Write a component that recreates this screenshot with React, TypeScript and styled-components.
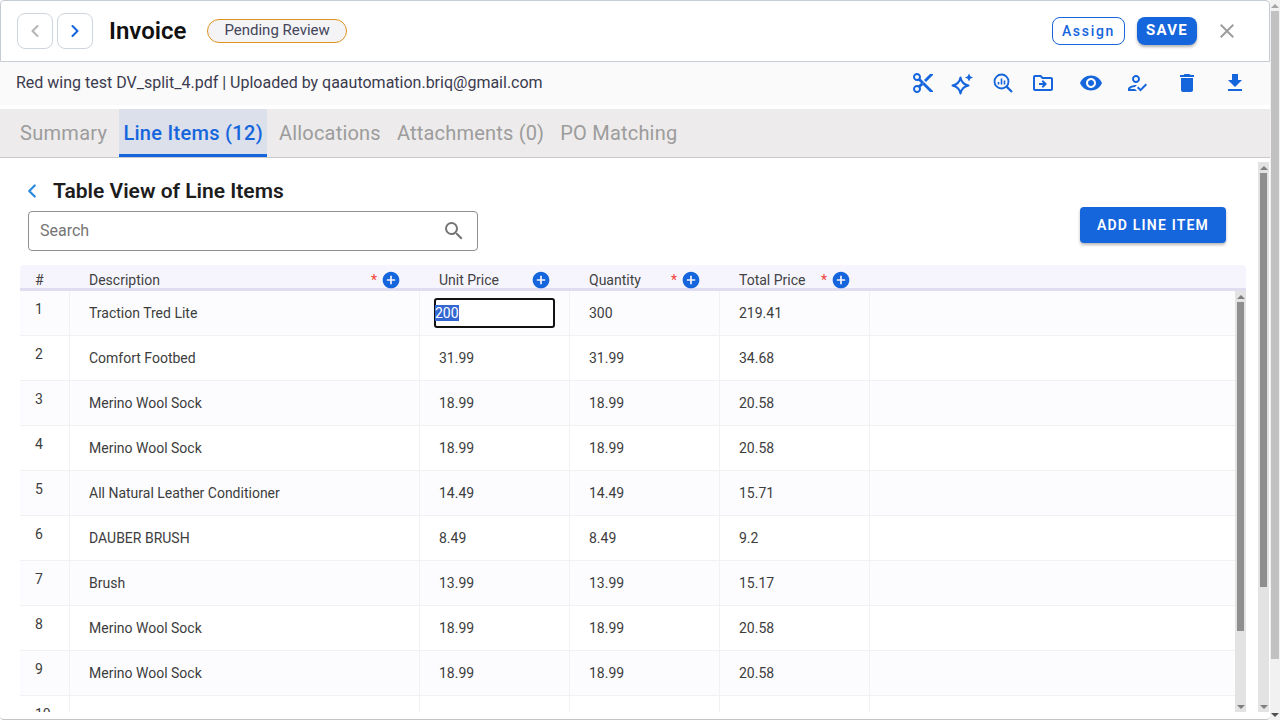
import styled, { createGlobalStyle } from 'styled-components';
import { ChevronLeft, ChevronRight } from 'lucide-react';
import {
  MdAddCircle,
  MdClose,
  MdContentCut,
  MdDelete,
  MdFileDownload,
  MdOutlineDriveFileMove,
  MdOutlineHowToReg,
  MdSearch,
  MdVisibility,
} from 'react-icons/md';

const BLUE = '#1565dc';

const GlobalStyle = createGlobalStyle`
  html, body {
    margin: 0;
    padding: 0;
    width: 1280px;
    height: 720px;
    overflow: hidden;
    background: #fff;
    font-family: Roboto, "Liberation Sans", sans-serif;
  }
  * { box-sizing: border-box; }
`;

const Page = styled.div`
  display: flex;
  width: 1280px;
  height: 720px;
`;

const Dialog = styled.div`
  display: flex;
  flex-direction: column;
  width: 1270px;
  height: 720px;
  border-bottom: 1px solid #c4c4c4;
  border-radius: 0 0 4px 4px;
  background: #fff;
  overflow: hidden;
`;

const Header = styled.header`
  display: flex;
  align-items: center;
  flex: none;
  height: 62px;
  padding: 0 30px 0 16px;
  border: 1px solid #c6ccd4;
  border-radius: 4px 4px 0 0;
`;

const NavButton = styled.button<{ $off?: boolean }>`
  display: flex;
  align-items: center;
  justify-content: center;
  width: 36px;
  height: 36px;
  margin-right: 4px;
  padding: 0;
  border: 1px solid #cfd5dc;
  border-radius: 8px;
  background: #fff;
  color: ${(p) => (p.$off ? '#b5b5b5' : BLUE)};
`;

const Title = styled.h1`
  margin: 0 21px 0 12px;
  font-size: 24px;
  font-weight: 600;
  color: #111;
`;

const Badge = styled.span`
  display: flex;
  align-items: center;
  height: 24px;
  padding: 0 16px 2px;
  border: 1px solid #e0921f;
  border-radius: 12px;
  background: #f4f4f6;
  font-size: 15px;
  color: #44445a;
`;

const Spacer = styled.div`
  flex: 1;
`;

const AssignButton = styled.button`
  width: 73px;
  height: 28px;
  margin-right: 12px;
  padding: 0;
  border: 1px solid ${BLUE};
  border-radius: 8px;
  background: #fff;
  color: ${BLUE};
  font: 500 14px Roboto, sans-serif;
  letter-spacing: 1.7px;
`;

const SaveButton = styled.button`
  width: 60px;
  height: 28px;
  margin-right: 18px;
  padding: 0 0 2px;
  border: 0;
  border-radius: 8px;
  background: ${BLUE};
  color: #fff;
  font: 700 15px Roboto, sans-serif;
  letter-spacing: 1.3px;
  box-shadow: 0 2px 3px rgba(0, 0, 0, 0.3);
`;

const CloseButton = styled.span`
  display: flex;
  color: #9e9e9e;
`;

const SubHeader = styled.div`
  display: flex;
  align-items: center;
  justify-content: space-between;
  flex: none;
  height: 43px;
  padding: 0 19px 0 16px;
  background: #fafafa;
  font-size: 16px;
  color: #3b3b4f;
`;

const FileLine = styled.span`
  margin-top: -2px;
`;

const IconRow = styled.div`
  display: flex;
  align-items: center;
  margin-top: -1px;
`;

const IconCell = styled.span<{ $w: number }>`
  display: flex;
  align-items: center;
  justify-content: center;
  width: ${(p) => p.$w}px;
  color: ${BLUE};
`;

const TabBar = styled.nav`
  display: flex;
  flex: none;
  gap: 8px;
  height: 49px;
  margin-top: 4px;
  padding-left: 16px;
  background: #edebeb;
  border-bottom: 1px solid #c9c9c9;
`;

const Tab = styled.div<{ $active?: boolean }>`
  display: flex;
  align-items: center;
  height: 48px;
  padding: 3px 4px 0;
  font-size: 20px;
  font-weight: ${(p) => (p.$active ? 500 : 400)};
  letter-spacing: ${(p) => (p.$active ? '0.3px' : '0.2px')};
  color: ${(p) => (p.$active ? BLUE : '#9c9c9c')};
  background: ${(p) => (p.$active ? '#dbe0ea' : 'transparent')};
  border-bottom: 3px solid ${(p) => (p.$active ? BLUE : 'transparent')};

  &:first-child {
    letter-spacing: 0.3px;
  }
`;

const Content = styled.div`
  display: flex;
  flex: 1;
  min-height: 0;
`;

const Main = styled.main`
  display: flex;
  flex-direction: column;
  flex: 1;
  min-width: 0;
  padding: 20px 12px 7px 20px;
`;

const SectionTitle = styled.div`
  display: flex;
  align-items: center;
  gap: 10px;
  height: 26px;
  margin-bottom: 7px;
  padding-left: 1px;
  color: #1d1d1d;
  font-size: 21px;
  font-weight: 600;

  svg {
    color: #2a8be0;
  }
`;

const Toolbar = styled.div`
  display: flex;
  align-items: flex-start;
  justify-content: space-between;
  margin-bottom: 14px;
  padding: 0 20px 0 8px;
`;

const SearchBox = styled.div`
  display: flex;
  align-items: center;
  justify-content: space-between;
  width: 450px;
  height: 40px;
  padding: 0 11px 0 11px;
  border: 1px solid #8f8f8f;
  border-radius: 4px;
  color: #757575;
  font-size: 16px;
`;

const SearchLabel = styled.span`
  margin-top: -2px;
`;

const AddButton = styled.button`
  width: 146px;
  height: 36px;
  margin-top: -4px;
  padding: 0;
  border: 0;
  border-radius: 4px;
  background: ${BLUE};
  color: #fff;
  font: 600 14px Roboto, sans-serif;
  letter-spacing: 1.2px;
  box-shadow: 0 2px 3px rgba(0, 0, 0, 0.28);
`;

const COLUMNS = '50px 350px 150px 150px 150px 1fr';

const HeadRow = styled.div`
  display: grid;
  grid-template-columns: ${COLUMNS};
  flex: none;
  height: 26px;
  border-bottom: 3px solid #e0ddf1;
  border-radius: 4px 4px 0 0;
  background: #f6f5fd;
  font-size: 14px;
  color: #424242;
`;

const HeadCell = styled.div`
  display: flex;
  align-items: center;
  padding: 5px 20px 0 19px;
`;

const IndexHead = styled(HeadCell)`
  padding-left: 15px;
`;

const HeadLabel = styled.span`
  flex: 1;
`;

const Star = styled.span`
  margin-right: 4px;
  color: #f44336;
  font-size: 14px;
`;

const AddColumn = styled.span`
  display: flex;
  width: 20px;
  margin-right: -1px;
  color: ${BLUE};
`;

const TableBody = styled.div`
  display: flex;
  flex: 1;
  min-height: 0;
`;

const Rows = styled.div`
  flex: 1;
  min-width: 0;
  overflow: hidden;
`;

const Row = styled.div<{ $odd: boolean }>`
  display: grid;
  grid-template-columns: ${COLUMNS};
  height: 45px;
  border-bottom: 1px solid #f1f1f3;
  background: ${(p) => (p.$odd ? '#fcfcff' : '#fff')};
  font-size: 14px;
  color: #3d3d3d;
`;

const Cell = styled.div`
  display: flex;
  align-items: center;
  padding: 0 19px;
  border-right: 1px solid #f1f1f3;
  white-space: nowrap;
`;

const IndexCell = styled(Cell)`
  padding: 0 0 8px 15px;
`;

const LastCell = styled.div``;

const EditCell = styled(Cell)`
  padding: 0 14px;
`;

const EditBox = styled.div`
  display: flex;
  align-items: center;
  width: 122px;
  height: 30px;
  margin-top: -1px;
  border: 2px solid #111;
  border-radius: 3px;
  background: #fff;
`;

const Selected = styled.span`
  margin-left: -1px;
  background: #3367d1;
  color: #fff;
`;

const Rail = styled.div<{ $track: string; $w: number }>`
  display: flex;
  flex-direction: column;
  align-items: center;
  flex: none;
  width: ${(p) => p.$w}px;
  background: ${(p) => p.$track};
`;

const Arrow = styled.span<{ $down?: boolean; $color: string }>`
  flex: none;
  width: 0;
  height: 0;
  margin: 4px 0 3px;
  border-left: 4px solid transparent;
  border-right: 4px solid transparent;
  ${(p) => (p.$down ? 'border-top' : 'border-bottom')}: 4px solid ${(p) => p.$color};
`;

const Thumb = styled.div<{ $h: number; $color: string; $w: number }>`
  flex: none;
  width: ${(p) => p.$w}px;
  height: ${(p) => p.$h}px;
  background: ${(p) => p.$color};
`;

const RailGap = styled.div`
  flex: 1;
`;

const OuterRail = styled(Rail)`
  margin: 4px 1px 7px 0;
`;

const PAGE_ICON = 24;

function SparkleIcon() {
  return (
    <svg width={PAGE_ICON} height={PAGE_ICON} viewBox="0 0 24 24" fill="none" stroke="currentColor" strokeWidth="2">
      <path d="M9.5 6.5 C10.3 11 12.5 13.5 17.5 14.5 C12.5 15.5 10.3 18 9.5 22.5 C8.7 18 6.5 15.5 1.5 14.5 C6.5 13.5 8.7 11 9.5 6.5 Z" strokeLinejoin="round" />
      <path d="M18 2.5 L19.3 5.2 L22 6.5 L19.3 7.8 L18 10.5 L16.7 7.8 L14 6.5 L16.7 5.2 Z" fill="currentColor" stroke="none" />
    </svg>
  );
}

function InsightIcon() {
  return (
    <svg width={PAGE_ICON} height={PAGE_ICON} viewBox="0 0 24 24" fill="none" stroke="currentColor">
      <circle cx="10.5" cy="10.5" r="7" strokeWidth="1.8" />
      <path d="M15.6 15.6 L21 21" strokeWidth="2.2" />
      <path d="M7.5 13.5 V11 M10.5 13.5 V7.5 M13.5 13.5 V9.5" strokeWidth="1.6" />
    </svg>
  );
}

const toolbarIcons = [
  { w: 40, node: <MdContentCut size={PAGE_ICON} /> },
  { w: 40, node: <SparkleIcon /> },
  { w: 40, node: <InsightIcon /> },
  { w: 40, node: <MdOutlineDriveFileMove size={PAGE_ICON} /> },
  { w: 56, node: <MdVisibility size={PAGE_ICON} /> },
  { w: 36, node: <MdOutlineHowToReg size={PAGE_ICON} /> },
  { w: 64, node: <MdDelete size={PAGE_ICON} /> },
  { w: 32, node: <MdFileDownload size={PAGE_ICON} /> },
];

const tabs = ['Summary', 'Line Items (12)', 'Allocations', 'Attachments (0)', 'PO Matching'];

const columns = [
  { label: 'Description', required: true },
  { label: 'Unit Price', required: false },
  { label: 'Quantity', required: true },
  { label: 'Total Price', required: true },
];

const lines = [
  ['Traction Tred Lite', '200', '300', '219.41'],
  ['Comfort Footbed', '31.99', '31.99', '34.68'],
  ['Merino Wool Sock', '18.99', '18.99', '20.58'],
  ['Merino Wool Sock', '18.99', '18.99', '20.58'],
  ['All Natural Leather Conditioner', '14.49', '14.49', '15.71'],
  ['DAUBER BRUSH', '8.49', '8.49', '9.2'],
  ['Brush', '13.99', '13.99', '15.17'],
  ['Merino Wool Sock', '18.99', '18.99', '20.58'],
  ['Merino Wool Sock', '18.99', '18.99', '20.58'],
  ['Merino Wool Sock', '18.99', '18.99', '20.58'],
];

export default function App() {
  return (
    <>
      <GlobalStyle />
      <Page>
        <Dialog>
          <Header>
            <NavButton $off>
              <ChevronLeft size={20} strokeWidth={2.5} />
            </NavButton>
            <NavButton>
              <ChevronRight size={20} strokeWidth={2.5} />
            </NavButton>
            <Title>Invoice</Title>
            <Badge>Pending Review</Badge>
            <Spacer />
            <AssignButton>Assign</AssignButton>
            <SaveButton>SAVE</SaveButton>
            <CloseButton>
              <MdClose size={24} />
            </CloseButton>
          </Header>

          <SubHeader>
            <FileLine>Red wing test DV_split_4.pdf | Uploaded by qaautomation.briq@gmail.com</FileLine>
            <IconRow>
              {toolbarIcons.map((icon, i) => (
                <IconCell key={i} $w={icon.w}>
                  {icon.node}
                </IconCell>
              ))}
            </IconRow>
          </SubHeader>

          <TabBar>
            {tabs.map((tab, i) => (
              <Tab key={tab} $active={i === 1}>
                {tab}
              </Tab>
            ))}
          </TabBar>

          <Content>
            <Main>
              <SectionTitle>
                <ChevronLeft size={22} strokeWidth={2.5} />
                Table View of Line Items
              </SectionTitle>
              <Toolbar>
                <SearchBox>
                  <SearchLabel>Search</SearchLabel>
                  <MdSearch size={24} />
                </SearchBox>
                <AddButton>ADD LINE ITEM</AddButton>
              </Toolbar>

              <HeadRow>
                <IndexHead>#</IndexHead>
                {columns.map((col) => (
                  <HeadCell key={col.label}>
                    <HeadLabel>{col.label}</HeadLabel>
                    {col.required && <Star>*</Star>}
                    <AddColumn>
                      <MdAddCircle size={20} />
                    </AddColumn>
                  </HeadCell>
                ))}
                <div />
              </HeadRow>

              <TableBody>
                <Rows>
                  {lines.map((line, i) => (
                    <Row key={i} $odd={i % 2 === 0}>
                      <IndexCell>{i + 1}</IndexCell>
                      <Cell>{line[0]}</Cell>
                      {i === 0 ? (
                        <EditCell>
                          <EditBox>
                            <Selected>{line[1]}</Selected>
                          </EditBox>
                        </EditCell>
                      ) : (
                        <Cell>{line[1]}</Cell>
                      )}
                      <Cell>{line[2]}</Cell>
                      <Cell>{line[3]}</Cell>
                      <LastCell />
                    </Row>
                  ))}
                </Rows>
                <Rail $track="#e3e3e3" $w={11}>
                  <Arrow $color="#7f7f7f" />
                  <Thumb $w={7} $h={329} $color="#8f8f8f" />
                  <RailGap />
                  <Arrow $down $color="#7f7f7f" />
                </Rail>
              </TableBody>
            </Main>

            <OuterRail $track="#e3e3e3" $w={11}>
              <Arrow $color="#7f7f7f" />
              <Thumb $w={7} $h={414} $color="#8f8f8f" />
              <RailGap />
              <Arrow $down $color="#7f7f7f" />
            </OuterRail>
          </Content>
        </Dialog>

        <Rail $track="#f1f1f1" $w={10}>
          <Arrow $color="#a3a3a3" />
          <Thumb $w={8} $h={648} $color="#c1c1c1" />
          <RailGap />
          <Arrow $down $color="#505050" />
        </Rail>
      </Page>
    </>
  );
}
